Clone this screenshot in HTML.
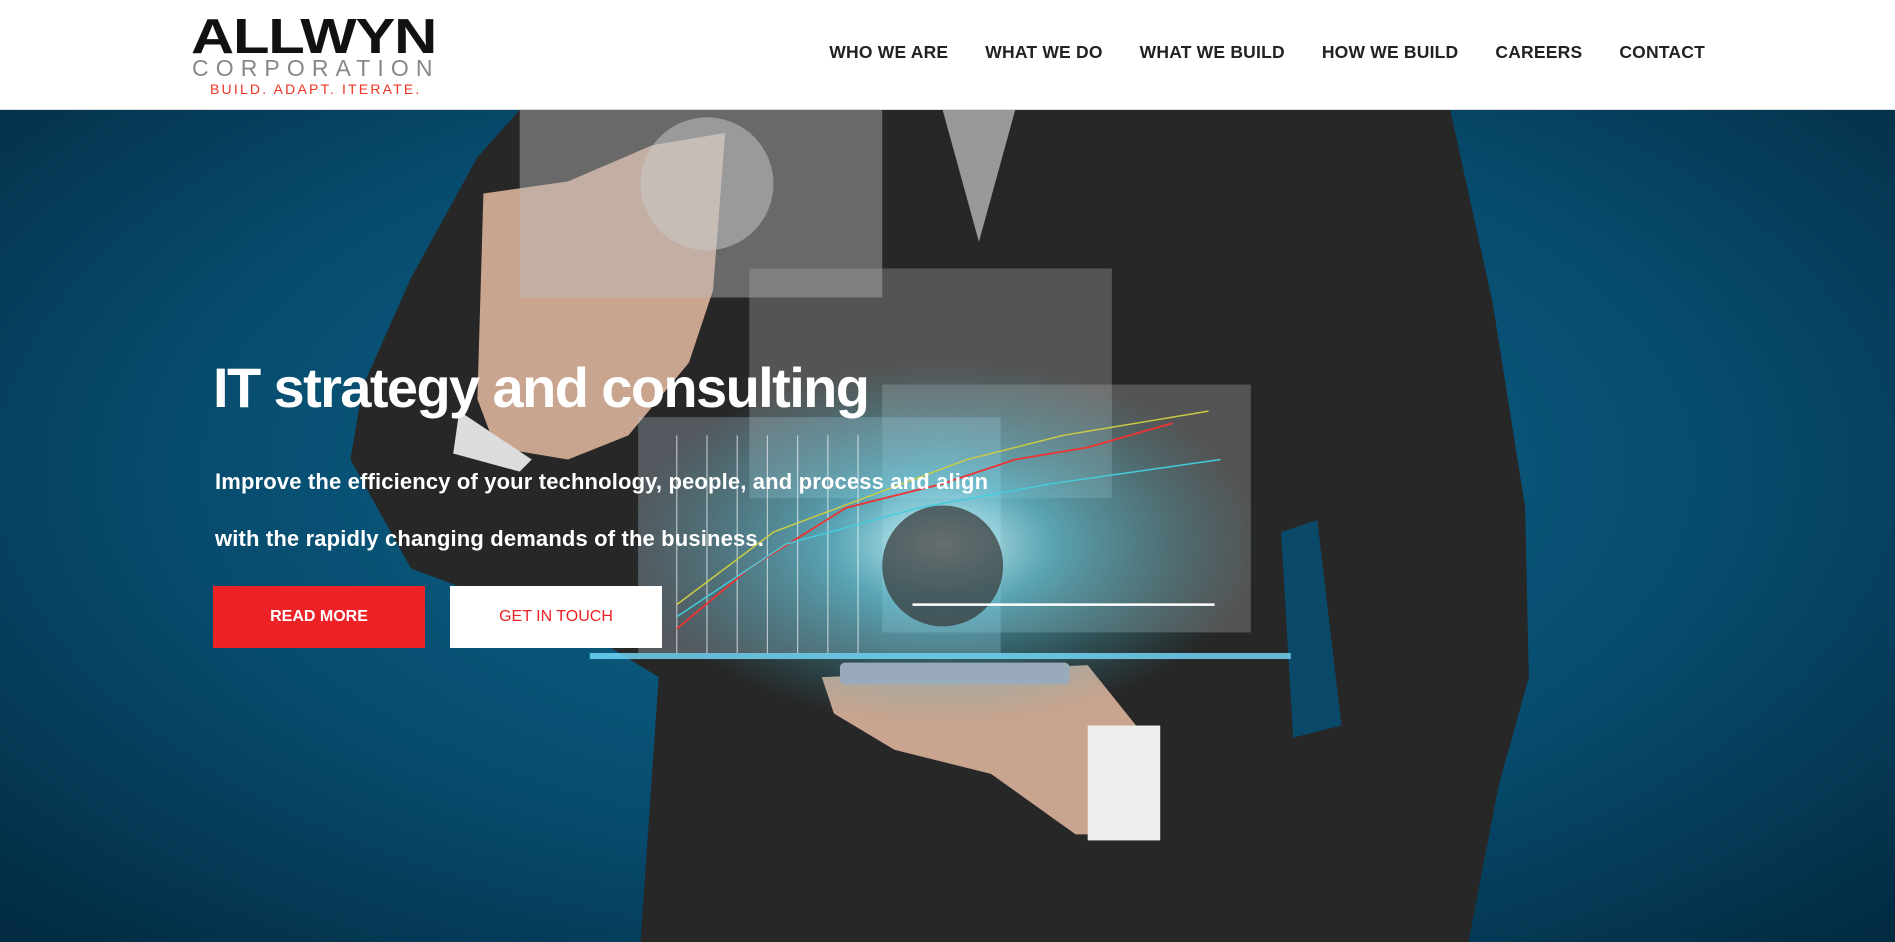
<!DOCTYPE html>
<html><head><meta charset="utf-8"><style>
*{margin:0;padding:0;box-sizing:border-box}
body{width:1895px;height:942px;overflow:hidden;background:#fff;font-family:"Liberation Sans",sans-serif;position:relative}
#hdr{position:absolute;left:0;top:0;width:1895px;height:110px;background:#fff;border-bottom:1px solid #ddd;z-index:3}
.logo1{position:absolute;left:191px;top:13px;font:900 49px/1 "Liberation Sans",sans-serif;letter-spacing:-1px;color:#111;transform:scaleX(1.22);transform-origin:left}
.logo2{position:absolute;left:192px;top:57px;font:400 23px/1 "Liberation Sans",sans-serif;letter-spacing:7.1px;color:#888}
.logo3{position:absolute;left:210px;top:82px;font:400 14px/1 "Liberation Sans",sans-serif;letter-spacing:2.2px;color:#e32}
nav{position:absolute;top:44px;right:190px;display:flex;gap:37px;font:700 17.5px/1 "Liberation Sans",sans-serif;letter-spacing:0.2px;color:#222}
#bg{position:absolute;left:0;top:0;z-index:1}
h1{position:absolute;left:213px;top:360px;font:700 56px/1 "Liberation Sans",sans-serif;letter-spacing:-1.6px;color:#fff;z-index:2}
.p{position:absolute;left:215px;font:700 22px/1 "Liberation Sans",sans-serif;color:#fff;z-index:2;letter-spacing:0.15px}
.b{position:absolute;top:586px;width:212px;height:62px;z-index:2;display:flex;align-items:center;justify-content:center;font:700 16px/1 "Liberation Sans",sans-serif}
</style></head><body>
<div id="hdr">
<div class="logo1">ALLWYN</div>
<div class="logo2">CORPORATION</div>
<div class="logo3">BUILD. ADAPT. ITERATE.</div>
<nav><span>WHO WE ARE</span><span>WHAT WE DO</span><span>WHAT WE BUILD</span><span>HOW WE BUILD</span><span>CAREERS</span><span>CONTACT</span></nav>
</div>
<svg id="bg" width="1895" height="942" viewBox="0 0 1568 779" preserveAspectRatio="none">
<defs>
<radialGradient id="bgG" cx="0.5" cy="0.5" r="0.7"><stop offset="0" stop-color="#0d6a90"/><stop offset="0.6" stop-color="#074a6c"/><stop offset="1" stop-color="#022a40"/></radialGradient>
<radialGradient id="glow" cx="0.5" cy="0.5" r="0.5"><stop offset="0" stop-color="#e8ffff" stop-opacity="0.95"/><stop offset="0.35" stop-color="#5fd8f0" stop-opacity="0.6"/><stop offset="1" stop-color="#3ab" stop-opacity="0"/></radialGradient>
</defs>
<rect width="1568" height="779" fill="url(#bgG)"/>
<path d="M430 91 L1200 91 L1235 250 L1262 420 L1265 560 L1240 650 L1215 779 L530 779 L545 560 L480 520 L420 500 L340 470 L290 380 L300 320 L340 230 L395 130 Z" fill="#272727"/>
<path d="M1060 440 L1090 430 L1110 600 L1070 610 Z" fill="#0a4a68"/>
<path d="M780 91 L840 91 L810 200 Z" fill="#999"/>
<path d="M400 160 L470 150 L540 120 L600 110 L590 240 L570 300 L520 360 L470 380 L410 370 L395 330 Z" fill="#c9a48e"/>
<path d="M380 340 L440 380 L430 390 L375 375 Z" fill="#ddd"/>
<path d="M680 560 L900 550 L940 600 L945 690 L890 690 L820 640 L740 620 L690 590 Z" fill="#c9a48e"/>
<rect x="900" y="600" width="60" height="95" fill="#eee"/>
<rect x="430" y="91" width="300" height="155" fill="#bbb" opacity="0.45"/>
<circle cx="585" cy="152" r="55" fill="#ccc" opacity="0.5"/>
<rect x="620" y="222" width="300" height="190" fill="#aaa" opacity="0.35"/>
<rect x="730" y="318" width="305" height="205" fill="#aaa" opacity="0.35"/>
<rect x="528" y="345" width="300" height="195" fill="#bcd" opacity="0.3"/>
<ellipse cx="780" cy="450" rx="260" ry="150" fill="url(#glow)"/>
<circle cx="780" cy="468" r="50" fill="#333" opacity="0.7"/>
<g stroke="#fff" opacity="0.6"><line x1="560" y1="360" x2="560" y2="540"/><line x1="585" y1="360" x2="585" y2="540"/><line x1="610" y1="360" x2="610" y2="540"/><line x1="635" y1="360" x2="635" y2="540"/><line x1="660" y1="360" x2="660" y2="540"/><line x1="685" y1="360" x2="685" y2="540"/><line x1="710" y1="360" x2="710" y2="540"/></g>
<polyline points="560,520 620,470 700,420 780,400 840,380 900,370 970,350" fill="none" stroke="#e33" stroke-width="1.5"/>
<polyline points="560,500 640,440 720,410 800,380 880,360 1000,340" fill="none" stroke="#cc4" stroke-width="1.2"/>
<polyline points="560,510 650,450 760,420 870,400 1010,380" fill="none" stroke="#4cd" stroke-width="1.2"/>
<line x1="755" y1="500" x2="1005" y2="500" stroke="#fff" stroke-width="2"/>
<rect x="488" y="540" width="580" height="5" fill="#7df" opacity="0.8"/>
<rect x="695" y="548" width="190" height="18" rx="4" fill="#9ab"/>
</svg>
<h1>IT strategy and consulting</h1>
<div class="p" style="top:471px">Improve the efficiency of your technology, people, and process and align</div>
<div class="p" style="top:528px">with the rapidly changing demands of the business.</div>
<div class="b" style="left:213px;background:#ed2227;color:#fff">READ MORE</div>
<div class="b" style="left:450px;background:#fff;color:#ed2227;font-weight:400">GET IN TOUCH</div>
</body></html>
